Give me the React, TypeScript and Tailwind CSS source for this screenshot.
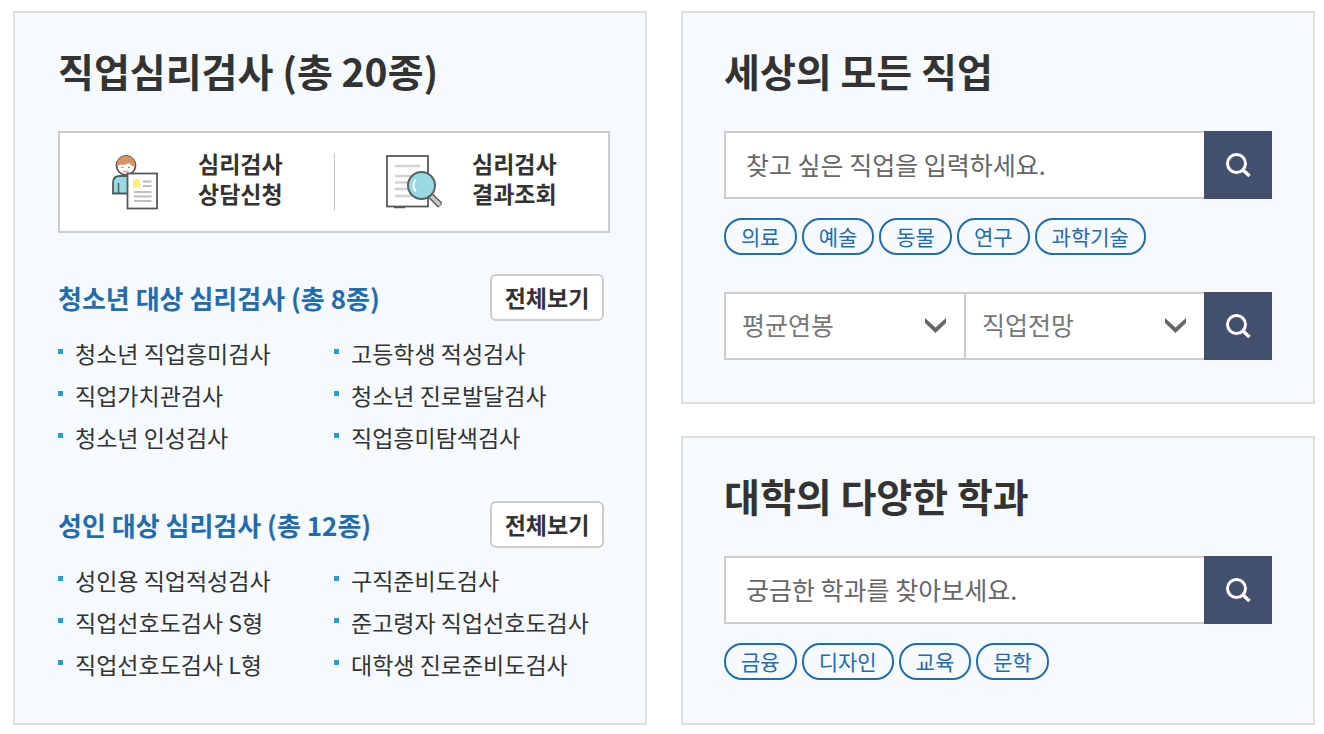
import type { ReactNode } from "react";

type TestGroupType = {
  title: string;
  items: string[];
  className?: string;
};

type TagListType = {
  tags: string[];
};

const youthTests = [
  "청소년 직업흥미검사",
  "고등학생 적성검사",
  "직업가치관검사",
  "청소년 진로발달검사",
  "청소년 인성검사",
  "직업흥미탐색검사",
];

const adultTests = [
  "성인용 직업적성검사",
  "구직준비도검사",
  "직업선호도검사 S형",
  "준고령자 직업선호도검사",
  "직업선호도검사 L형",
  "대학생 진로준비도검사",
];

const CounselIcon = () => (
  <svg className="h-[56px] w-[56px] shrink-0" viewBox="0 0 56 56" fill="none" aria-hidden="true">
    <path
      d="M1 39.500V28.500C1 24 4 22 8 22H16C20 22 22 24 22 28V39.500Z"
      fill="#98d9e2"
      stroke="#55595c"
      strokeWidth="1.800"
    />
    <path d="M6.500 29V39" stroke="#55595c" strokeWidth="1.500" />
    <circle cx="14" cy="11.500" r="9.500" fill="#fff" stroke="#55595c" strokeWidth="1.800" />
    <path
      d="M5 13C4 6 8.500 2 14 2S24 6 23 13C20.500 12.500 18.500 11 17 9C13.500 11 10 11.500 8 10.500Z"
      fill="#dc9362"
    />
    <path d="M9.500 13.500H11.500M16 13.500H18" stroke="#888" strokeWidth="1" />
    <path d="M11 17.500H16.500" stroke="#f4a3a3" strokeWidth="1.800" />
    <rect x="15.500" y="19.500" width="29.500" height="35" fill="#fff" stroke="#55595c" strokeWidth="1.800" />
    <rect x="21" y="25.500" width="7" height="8" fill="#fdec80" />
    <path d="M31 27.500H39.500M31 32H39.500M22 38H39.500M22 42.500H39.500M22 47H39.500" stroke="#bdbdbd" strokeWidth="1.800" />
  </svg>
);

const ResultIcon = () => (
  <svg className="h-[56px] w-[56px] shrink-0" viewBox="0 0 56 56" fill="none" aria-hidden="true">
    <rect x="1" y="2" width="41" height="50.500" fill="#fff" stroke="#55595c" strokeWidth="1.800" />
    <path d="M9 12H34M9 22H25M9 28.500H22M9 35H22M9 42H26" stroke="#d3d3d3" strokeWidth="2.500" />
    <path d="M8 53.500H19" stroke="#55595c" strokeWidth="1.500" />
    <path d="M45 42L54.500 51.500" stroke="#55595c" strokeWidth="6.500" />
    <path d="M45 42L54 51" stroke="#c9c9c9" strokeWidth="3.500" />
    <circle cx="35.500" cy="31.500" r="13.500" fill="#98d9e2" stroke="#5a6064" strokeWidth="2" />
    <path d="M30 25.500C26.500 29 26.500 34 30 37.500" stroke="#fff" strokeWidth="2" />
  </svg>
);

const SearchButton = ({ label }: { label: string }) => (
  <button type="submit" aria-label={label} className="h-[68px] w-[68px] shrink-0 bg-[#42506e]">
    <svg className="h-[68px] w-[68px]" viewBox="0 0 68 68" fill="none" stroke="#fff" aria-hidden="true">
      <circle cx="32.500" cy="32.500" r="9" strokeWidth="3" />
      <path d="M38.500 38.500L45.500 45" strokeWidth="3.500" />
    </svg>
  </button>
);

const Panel = ({ title, className = "", children }: { title: string; className?: string; children: ReactNode }) => (
  <section className={`border-2 border-[#dddfe0] bg-[#f6fafd] pt-[27px] ${className}`}>
    <h2 className="mb-[31px] text-[39px] leading-[60px] font-bold">{title}</h2>
    {children}
  </section>
);

const TestGroup = ({ title, items, className = "" }: TestGroupType) => (
  <div className={className}>
    <div className="flex items-center justify-between pr-[6px]">
      <h3 className="text-[26px] leading-[30px] font-bold text-[#226cae]">{title}</h3>
      <button
        type="button"
        className="h-[47px] w-[114px] rounded-md border-2 border-[#cccccc] bg-white pb-[2px] text-[23px] leading-[30px] font-bold"
      >
        전체보기
      </button>
    </div>
    <ul className="mt-[11px] grid grid-cols-2">
      {items.map((item) => (
        <li
          key={item}
          className="flex items-start gap-3 text-[23px] leading-[42px] whitespace-nowrap before:mt-[17px] before:h-[5px] before:w-[5px] before:shrink-0 before:bg-[#1ba1d1] before:content-['']"
        >
          <a href="#">{item}</a>
        </li>
      ))}
    </ul>
  </div>
);

const TagList = ({ tags }: TagListType) => (
  <ul className="mt-[19px] flex flex-wrap gap-[5px]">
    {tags.map((tag) => (
      <li key={tag}>
        <a
          href="#"
          className="block rounded-[18px] border-2 border-[#226cae] px-[15px] text-[21px] leading-[33px] text-[#226cae]"
        >
          {tag}
        </a>
      </li>
    ))}
  </ul>
);

const SearchBox = ({ label, placeholder }: { label: string; placeholder: string }) => (
  <form className="flex">
    <input
      type="text"
      aria-label={label}
      placeholder={placeholder}
      className="h-[68px] min-w-0 flex-1 border-2 border-r-0 border-[#cccccc] bg-white pb-[3px] pl-5 text-[25px] placeholder:text-[#666666]"
    />
    <SearchButton label={label} />
  </form>
);

const SelectBox = ({ label }: { label: string }) => (
  <div className="relative min-w-0 flex-1">
    <select
      aria-label={label}
      className="h-[68px] w-full appearance-none border-2 border-r-0 border-[#cccccc] bg-white pb-[3px] pl-4 text-[25px] text-[#777777]"
    >
      <option>{label}</option>
    </select>
    <svg
      className="pointer-events-none absolute top-[26px] right-[18px] h-[15px] w-[21px]"
      viewBox="0 0 21 15"
      fill="#666"
      aria-hidden="true"
    >
      <path d="M0 0L10.500 9.500L21 0V5L10.500 15L0 5Z" />
    </svg>
  </div>
);

const App = () => {
  return (
    <main className="grid grid-cols-2 gap-[34px] pt-[11px] pr-[9px] pb-[9px] pl-[13px] font-['Noto_Sans_CJK_KR',sans-serif] text-[#333333]">
      <Panel title="직업심리검사 (총 20종)" className="pr-[35px] pb-[38px] pl-[43px]">
        <div className="grid grid-cols-2 border-2 border-[#cccccc] bg-white py-5 text-[23px] leading-[30px] font-bold">
          <a href="#" className="flex h-[58px] items-center gap-[30px] pl-[52px]">
            <CounselIcon />
            <span className="flex flex-col pb-2">
              <span>심리검사</span>
              <span>상담신청</span>
            </span>
          </a>
          <a href="#" className="flex h-[58px] items-center gap-[30px] border-l border-[#cccccc] pl-[51px]">
            <ResultIcon />
            <span className="flex flex-col pb-2">
              <span>심리검사</span>
              <span>결과조회</span>
            </span>
          </a>
        </div>
        <TestGroup title="청소년 대상 심리검사 (총 8종)" items={youthTests} className="mt-[41px]" />
        <TestGroup title="성인 대상 심리검사 (총 12종)" items={adultTests} className="mt-[43px]" />
      </Panel>

      <div className="flex flex-col gap-8">
        <Panel title="세상의 모든 직업" className="px-[41px] pb-[42px]">
          <SearchBox label="직업 검색" placeholder="찾고 싶은 직업을 입력하세요." />
          <TagList tags={["의료", "예술", "동물", "연구", "과학기술"]} />
          <form className="mt-[37px] flex">
            <SelectBox label="평균연봉" />
            <SelectBox label="직업전망" />
            <SearchButton label="조건 검색" />
          </form>
        </Panel>
        <Panel title="대학의 다양한 학과" className="flex-1 px-[41px] pb-[42px]">
          <SearchBox label="학과 검색" placeholder="궁금한 학과를 찾아보세요." />
          <TagList tags={["금융", "디자인", "교육", "문학"]} />
        </Panel>
      </div>
    </main>
  );
};

export default App;
